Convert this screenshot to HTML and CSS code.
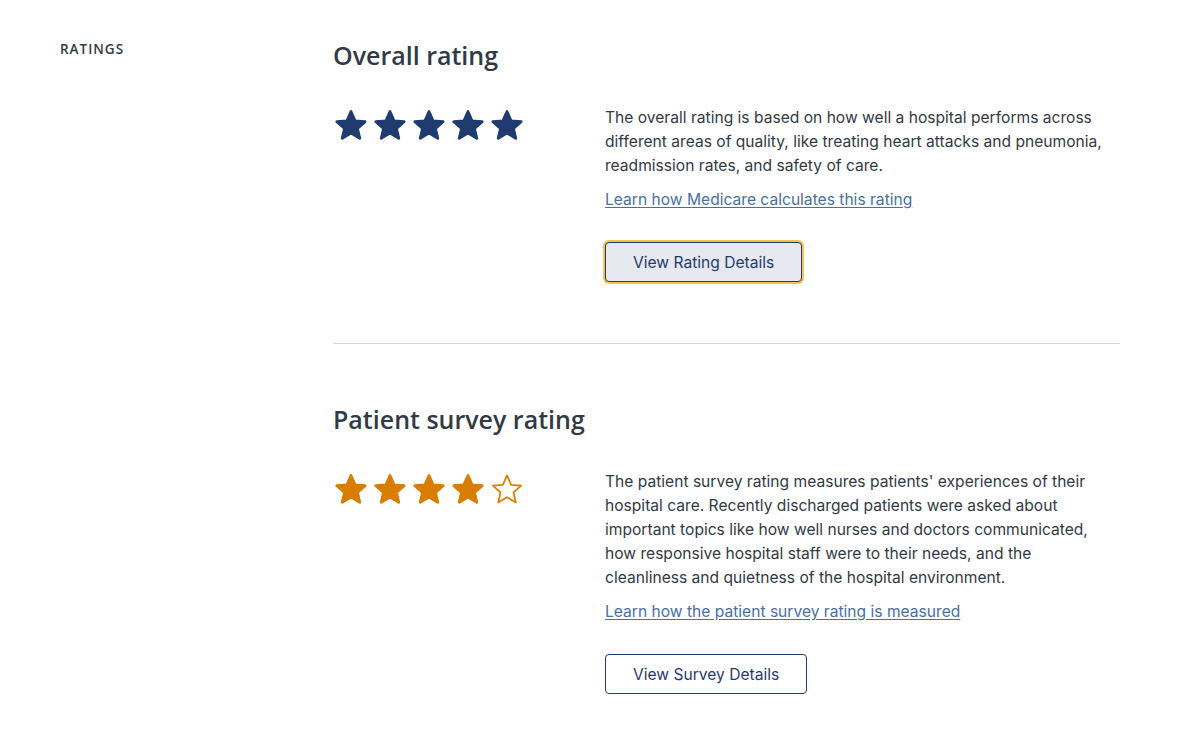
FILE: index.html
```html
<!DOCTYPE html>
<html lang="en">
<head>
<meta charset="utf-8">
<title>Ratings</title>
<link rel="stylesheet" href="styles.css">
</head>
<body>
<svg width="0" height="0" class="defs">
  <defs>
    <path id="star" d="M16 3.2 L19.6 11.4 L28.4 12.2 L21.7 18.1 L23.7 26.8 L16 22.2 L8.3 26.8 L10.3 18.1 L3.6 12.2 L12.4 11.4 Z"/>
  </defs>
</svg>
<main class="page">
  <div class="side">RATINGS</div>
  <div class="content">
    <section class="rating">
      <h2 class="title">Overall rating</h2>
      <div class="row">
        <div class="stars navy">
          <svg viewBox="2 2 28 27" class="star full"><use href="#star"/></svg>
          <svg viewBox="2 2 28 27" class="star full"><use href="#star"/></svg>
          <svg viewBox="2 2 28 27" class="star full"><use href="#star"/></svg>
          <svg viewBox="2 2 28 27" class="star full"><use href="#star"/></svg>
          <svg viewBox="2 2 28 27" class="star full"><use href="#star"/></svg>
        </div>
        <div class="desc">
          <p class="text">The overall rating is based on how well a hospital performs across different areas of quality, like treating heart attacks and pneumonia, readmission rates, and safety of care.</p>
          <p class="more"><a href="#" class="link">Learn how Medicare calculates this rating</a></p>
          <button class="btn focused">View Rating Details</button>
        </div>
      </div>
    </section>
    <hr class="divider">
    <section class="rating second">
      <h2 class="title">Patient survey rating</h2>
      <div class="row">
        <div class="stars orange">
          <svg viewBox="2 2 28 27" class="star full"><use href="#star"/></svg>
          <svg viewBox="2 2 28 27" class="star full"><use href="#star"/></svg>
          <svg viewBox="2 2 28 27" class="star full"><use href="#star"/></svg>
          <svg viewBox="2 2 28 27" class="star full"><use href="#star"/></svg>
          <svg viewBox="2 2 28 27" class="star empty"><use href="#star"/></svg>
        </div>
        <div class="desc">
          <p class="text">The patient survey rating measures patients' experiences of their hospital care. Recently discharged patients were asked about important topics like how well nurses and doctors communicated, how responsive hospital staff were to their needs, and the cleanliness and quietness of the hospital environment.</p>
          <p class="more"><a href="#" class="link">Learn how the patient survey rating is measured</a></p>
          <button class="btn survey">View Survey Details</button>
        </div>
      </div>
    </section>
  </div>
</main>
</body>
</html>
```
FILE: styles.css
```css
* { box-sizing: border-box; }
html, body { margin: 0; padding: 0; background: #fff; }
body {
  font-family: "Inter", "Liberation Sans", sans-serif;
  color: #323a45;
}
.defs { position: absolute; }
.page {
  display: grid;
  grid-template-columns: 273px 787px;
  padding: 39px 0 0 60px;
}
.side {
  font-family: "Open Sans", "Liberation Sans", sans-serif;
  font-size: 13.5px;
  font-weight: 600;
  letter-spacing: 1px;
  color: #323a45;
  line-height: 20px;
}
.title {
  margin: 0;
  font-family: "Open Sans", "Liberation Sans", sans-serif;
  font-weight: 600;
  font-size: 25px;
  line-height: 32px;
  color: #323a45;
}
.row {
  display: grid;
  grid-template-columns: 272px 1fr;
  margin-top: 35px;
}
.stars {
  display: flex;
  gap: 7px;
  padding: 4px 0 0 2px;
}
.star { width: 32px; height: 31px; display: block; }
.star use { stroke-linejoin: round; stroke-width: 2.4px; }
.navy .star use { fill: #1f3b70; stroke: #1f3b70; }
.orange .full use { fill: #d97d00; stroke: #d97d00; }
.orange .empty use { fill: #fff; stroke: #d97d00; stroke-width: 1.5px; }
.desc { font-size: 15.6px; line-height: 24px; max-width: 506px; }
.text { margin: 0; }
.more { margin: 10px 0 0; }
.link { color: #4a6fa5; text-decoration: underline; text-underline-offset: 2px; }
.btn {
  margin-top: 30px;
  font-family: "Inter", "Liberation Sans", sans-serif;
  font-size: 15.6px;
  color: #1f3b70;
  background: #fff;
  border: 1px solid #1f3b70;
  border-radius: 4px;
  height: 40px;
  padding: 0 27px;
  cursor: pointer;
}
.btn.focused {
  margin-top: 30px;
  background: #e6e9f0;
  box-shadow: 0 0 0 2px #f7c24a;
}
.divider {
  border: 0;
  border-top: 1px solid #d6d7d9;
  margin: 61px 0 0;
}
.second { margin-top: 59px; }
```
